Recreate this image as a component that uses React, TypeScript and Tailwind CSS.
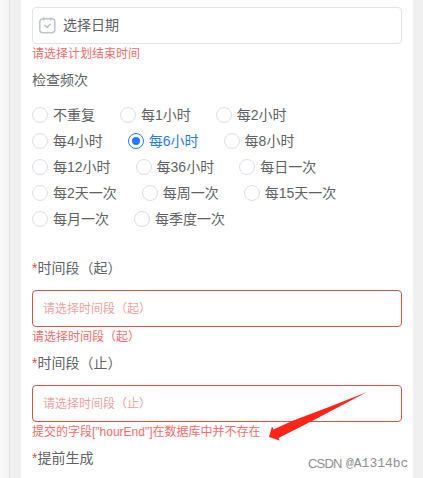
import React from "react";

interface OptionProps {
  label: string;
  checked?: boolean;
}

interface FieldProps {
  placeholder: string;
  error: string;
}

const rows = [
  ["不重复", "每1小时", "每2小时"],
  ["每4小时", "每6小时", "每8小时"],
  ["每12小时", "每36小时", "每日一次"],
  ["每2天一次", "每周一次", "每15天一次"],
  ["每月一次", "每季度一次"],
];

function Option({ label, checked }: OptionProps) {
  return (
    <div className="flex items-center gap-[5px] whitespace-nowrap">
      <span
        className={
          checked
            ? "flex h-4 w-4 items-center justify-center rounded-full border border-[#2979ff]"
            : "h-4 w-4 rounded-full border border-[#dcdfe6]"
        }
      >
        {checked && <span className="h-2 w-2 rounded-full bg-[#2979ff]"></span>}
      </span>
      <span className={checked ? "text-[#2979ff]" : "text-[#606266]"}>{label}</span>
    </div>
  );
}

function Label({ text }: { text: string }) {
  return (
    <div className="flex h-5 items-center leading-5">
      <span className="text-[#e54d42]">*</span>
      <span>{text}</span>
    </div>
  );
}

function Field({ placeholder, error }: FieldProps) {
  return (
    <div className="mt-3">
      <div className="flex h-[37px] items-center rounded border border-[#dd524d] pl-[10px] text-xs text-[#f4a19e]">
        {placeholder}
      </div>
      <div className="h-[19px] pt-px text-xs leading-[19px] text-[#fa6b6b]">{error}</div>
    </div>
  );
}

export default function App() {
  return (
    <div className="relative flex h-[478px] w-[423px] overflow-hidden bg-[#f0f0f0] font-['Liberation_Sans','Noto_Sans_CJK_SC',sans-serif] text-sm text-[#606266]">
      <div className="w-[10px] shrink-0 border-r border-[#e2e2e2] bg-linear-to-r from-[#f9f9f9] to-[#f3f3f3]"></div>
      <div className="ml-[11px] w-[392px] shrink-0 bg-white pt-[7px] pr-[11px] pl-[11px]">
        <div className="flex h-[37px] items-center rounded border border-[#e4e4e4] pl-[6px]">
          <svg width="17" height="17" viewBox="0 0 17 17" fill="none" stroke="#c0c4cc" strokeWidth="1.5" strokeLinecap="round">
            <rect x=".8" y="1.8" width="15" height="14" rx="3" />
            <path d="M4.8.9v2.2M11.8.9v2.2M5.8 8.4l2.2 2 3.2-3.2" />
          </svg>
          <span className="ml-[7px] pb-0.5 leading-5">选择日期</span>
        </div>
        <div className="h-[19px] pt-px text-xs leading-[19px] text-[#fa6b6b]">请选择计划结束时间</div>
        <div className="mt-[7px] h-5 leading-5">检查频次</div>
        <div className="mt-3">
          {rows.map((row, i) => (
            <div key={i} className="flex h-[26px] items-center gap-[25px]">
              {row.map((label) => (
                <Option key={label} label={label} checked={label === "每6小时"} />
              ))}
            </div>
          ))}
        </div>
        <div className="mt-[26px]">
          <Label text="时间段（起）" />
          <Field placeholder="请选择时间段（起）" error="请选择时间段（起）" />
        </div>
        <div className="mt-[7px]">
          <Label text="时间段（止）" />
          <Field placeholder="请选择时间段（止）" error={'提交的字段["hourEnd"]在数据库中并不存在'} />
        </div>
        <div className="mt-[7px]">
          <Label text="提前生成" />
        </div>
      </div>
      <svg className="absolute top-[388px] left-[264px]" width="110" height="60" viewBox="0 0 110 60">
        <path d="M103 4 65 19 28 33 9.5 41.5 8 38.5 5 49 15.5 52.5 14.5 50 48 33Z" fill="#ff2418" />
      </svg>
      <div className="absolute top-[456px] left-[308px] flex text-[13px] leading-4 text-[#909090]">
        <span className="w-[38px] tracking-[-0.8px]">CSDN</span>
        <span className="font-['Liberation_Mono',monospace]">@A1314bc</span>
      </div>
    </div>
  );
}
